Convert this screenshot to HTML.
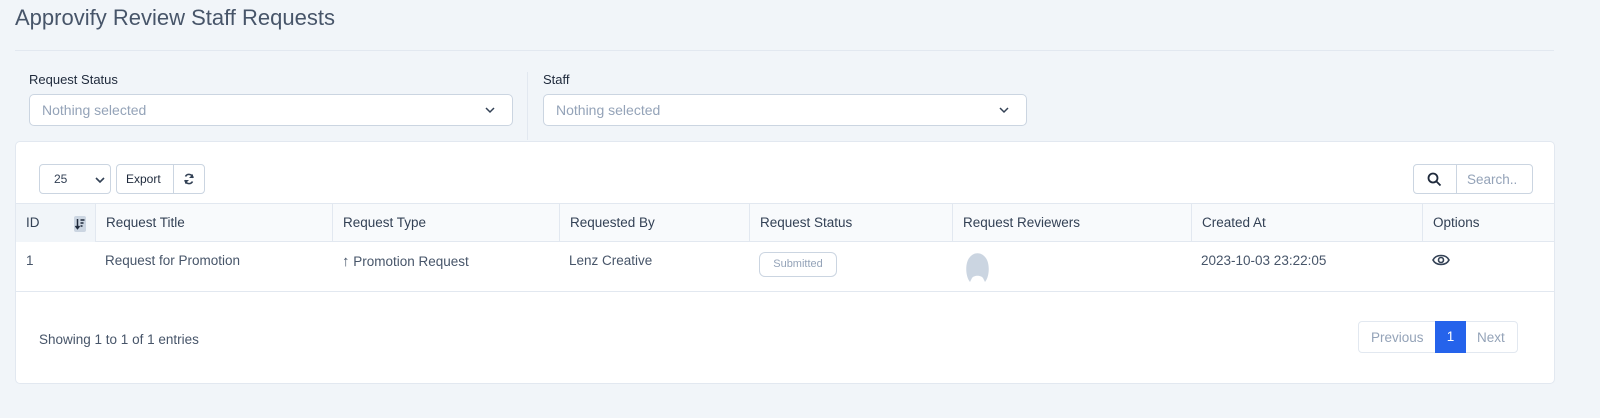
<!DOCTYPE html>
<html><head><style>
*{box-sizing:border-box;margin:0;padding:0}
body{width:1600px;height:418px;background:#f1f5f9;font-family:"Liberation Sans",sans-serif;color:#334155;position:relative;overflow:hidden;font-size:13px}
.a{position:absolute}
.sel{position:absolute;height:32px;border:1px solid #cbd5e1;border-radius:5px;background:#fff;color:#94a3b8;font-size:14px;padding:7px 12px}
.chev{position:absolute;right:16px;top:9px}
.th{position:absolute;top:0;height:38px;line-height:38px;font-size:13.5px;color:#334155;padding-left:10px;border-left:1px solid #e2e8f0}
.td{position:absolute;top:11px;font-size:13.5px;color:#475569}
</style></head><body>
<div class="a" style="left:15px;top:5px;font-size:22px;color:#475569">Approvify Review Staff Requests</div>
<div class="a" style="left:15px;top:50px;width:1539px;height:1px;background:#e2e8f0"></div>
<div class="a" style="left:29px;top:72px;font-size:13px;color:#1e293b">Request Status</div>
<div class="sel" style="left:29px;top:94px;width:484px">Nothing selected<svg class="chev" width="12" height="12" viewBox="0 0 12 12"><path d="M2 4l4 4 4-4" stroke="#334155" stroke-width="1.5" fill="none"/></svg></div>
<div class="a" style="left:527px;top:72px;width:1px;height:68px;background:#e2e8f0"></div>
<div class="a" style="left:543px;top:72px;font-size:13px;color:#1e293b">Staff</div>
<div class="sel" style="left:543px;top:94px;width:484px">Nothing selected<svg class="chev" width="12" height="12" viewBox="0 0 12 12"><path d="M2 4l4 4 4-4" stroke="#334155" stroke-width="1.5" fill="none"/></svg></div>

<div class="a" style="left:15px;top:141px;width:1540px;height:243px;background:#fff;border:1px solid #e2e8f0;border-radius:5px">
  <div class="a" style="left:23px;top:22px;width:72px;height:30px;border:1px solid #cbd5e1;border-radius:4px;font-size:12px;padding:7px 14px;color:#334155">25<svg class="a" style="left:55px;top:10px" width="10" height="10" viewBox="0 0 10 10"><path d="M1 3l4 4 4-4" stroke="#334155" stroke-width="1.6" fill="none"/></svg></div>
  <div class="a" style="left:100px;top:22px;width:89px;height:30px;border:1px solid #cbd5e1;border-radius:4px">
    <div class="a" style="left:9px;top:7px;font-size:12px;color:#1e293b">Export</div>
    <div class="a" style="left:56px;top:0;width:1px;height:28px;background:#cbd5e1"></div>
    <svg class="a" style="left:66px;top:8px" width="12" height="12" viewBox="0 0 12 12"><path d="M10 5A4 4 0 0 0 2.5 3.5M2 7a4 4 0 0 0 7.5 1.5" stroke="#334155" stroke-width="1.6" fill="none"/><path d="M10 1v4H6zM2 11V7h4z" fill="#334155"/></svg>
  </div>
  <div class="a" style="left:1397px;top:22px;width:120px;height:30px;border:1px solid #cbd5e1;border-radius:4px">
    <svg class="a" style="left:13px;top:7px" width="15" height="15" viewBox="0 0 15 15"><circle cx="6" cy="6" r="4.5" stroke="#1e293b" stroke-width="1.8" fill="none"/><path d="M9.5 9.5l4 4" stroke="#1e293b" stroke-width="1.8"/></svg>
    <div class="a" style="left:42px;top:0;width:1px;height:28px;background:#cbd5e1"></div>
    <div class="a" style="left:53px;top:7px;font-size:13.5px;color:#94a3b8">Search..</div>
  </div>
  <div class="a" style="left:0;top:61px;width:1538px;height:39px;background:#f8fafc;border-top:1px solid #e2e8f0;border-bottom:1px solid #e2e8f0">
    <div class="th" style="left:0;border:none;background:#f1f5f9;width:79px">ID</div>
    <svg class="a" style="left:58px;top:12px" width="12" height="16" viewBox="0 0 12 16"><rect width="12" height="16" rx="2" fill="#cbd5e1"/><path d="M3.5 3v9M1.5 10l2 2.5 2-2.5" stroke="#1e293b" stroke-width="1.5" fill="none"/><path d="M6.5 4h4M6.5 7h3M6.5 10h2" stroke="#1e293b" stroke-width="1.4"/></svg>
    <div class="th" style="left:79px">Request Title</div>
    <div class="th" style="left:316px">Request Type</div>
    <div class="th" style="left:543px">Requested By</div>
    <div class="th" style="left:733px">Request Status</div>
    <div class="th" style="left:936px">Request Reviewers</div>
    <div class="th" style="left:1175px">Created At</div>
    <div class="th" style="left:1406px">Options</div>
  </div>
  <div class="a" style="left:0;top:100px;width:1538px;height:50px;border-bottom:1px solid #e2e8f0">
    <div class="td" style="left:10px">1</div>
    <div class="td" style="left:89px">Request for Promotion</div>
    <div class="td" style="left:326px"><b style="font-size:15px">↑</b> Promotion Request</div>
    <div class="td" style="left:553px">Lenz Creative</div>
    <div class="a" style="left:743px;top:10px;width:78px;height:25px;border:1px solid #cbd5e1;border-radius:6px;font-size:11px;color:#94a3b8;text-align:center;line-height:23px">Submitted</div>
    <svg class="a" style="left:946px;top:10px" width="31" height="30" viewBox="0 0 31 30"><path d="M8 30C3 24 3 10 8 5C12 0 19 0 23 5C28 10 28 24 23 30L21 26C19 23 12 23 10 26Z" fill="#cbd5e1"/></svg>
    <div class="td" style="left:1185px">2023-10-03 23:22:05</div>
    <svg class="a" style="left:1416px;top:11px" width="18" height="14" viewBox="0 0 18 14"><path d="M1 7C4 1 14 1 17 7C14 13 4 13 1 7z" stroke="#334155" stroke-width="1.6" fill="none"/><circle cx="9" cy="7" r="2.5" stroke="#334155" stroke-width="1.6" fill="none"/></svg>
  </div>
  <div class="a" style="left:23px;top:190px;font-size:13.5px;color:#475569">Showing 1 to 1 of 1 entries</div>
  <div class="a" style="left:1342px;top:179px;width:160px;height:32px;border:1px solid #e2e8f0;border-radius:4px;font-size:13.5px;color:#94a3b8">
    <div class="a" style="left:12px;top:8px">Previous</div>
    <div class="a" style="left:76px;top:-1px;width:31px;height:32px;background:#2563eb;color:#fff;text-align:center;line-height:32px">1</div>
    <div class="a" style="left:118px;top:8px">Next</div>
  </div>
</div>
</body></html>
